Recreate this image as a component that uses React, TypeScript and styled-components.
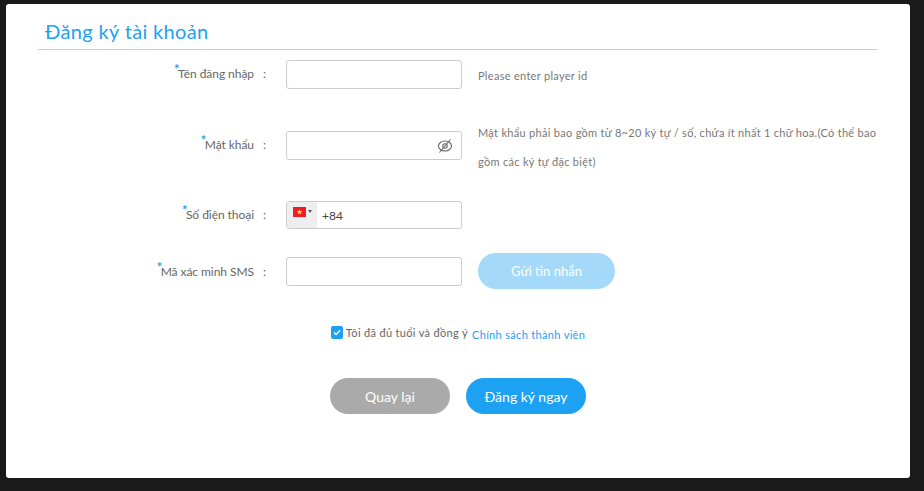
import React from "react";
import styled, { createGlobalStyle } from "styled-components";

const GlobalStyle = createGlobalStyle`
  html, body {
    margin: 0;
    height: 100%;
    background: #1a1a1a;
    font-family: "Lato", "Liberation Sans", sans-serif;
  }
`;

const Screen = styled.div`
  width: 924px;
  height: 491px;
  padding: 4px 14px 13px 6px;
  box-sizing: border-box;
  overflow: hidden;
`;

const Panel = styled.div`
  height: 474px;
  background: #fff;
  border-radius: 3px;
  padding: 0 32px;
  box-sizing: border-box;
`;

const Title = styled.h1`
  margin: 0;
  height: 46px;
  padding: 13px 0 0 7px;
  box-sizing: border-box;
  border-bottom: 1px solid #ccc;
  color: #1da1f2;
  font-size: 20px;
  line-height: 28px;
  font-weight: 400;
  letter-spacing: 0.35px;
`;

const Form = styled.div`
  display: flex;
  flex-direction: column;
  padding-top: 10px;
`;

const Row = styled.div<{ $height: number; $align?: string }>`
  display: grid;
  grid-template-columns: 232px 176px 1fr;
  column-gap: 16px;
  height: ${(p) => p.$height}px;
  align-items: ${(p) => p.$align || "start"};
`;

const Label = styled.label`
  display: flex;
  justify-content: flex-end;
  align-items: center;
  height: 27px;
  color: #666;
  font-size: 12px;
  letter-spacing: -0.05px;
`;

const LabelText = styled.span`
  position: relative;
  margin-right: 9px;
  &::before {
    content: "*";
    position: absolute;
    left: -4px;
    top: -5px;
    color: #1da1f2;
    font-size: 13px;
    font-weight: 700;
  }
`;

const Colon = styled.span`
  width: 7px;
`;

const FieldBox = styled.div<{ $height?: number }>`
  display: flex;
  align-items: center;
  height: ${(p) => p.$height ?? 29}px;
  border: 1px solid #ccc;
  border-radius: 3px;
  box-sizing: border-box;
  background: #fff;
  overflow: hidden;
`;

const EyeSlot = styled.span`
  margin-left: auto;
  margin-right: 8px;
  display: flex;
`;

const FlagSelect = styled.div`
  display: flex;
  align-items: flex-start;
  gap: 2px;
  width: 30px;
  height: 100%;
  padding: 5px 0 0 6px;
  box-sizing: border-box;
  background: #eee;
`;

const Caret = styled.span`
  margin-top: 3px;
  width: 0;
  height: 0;
  border-left: 2.5px solid transparent;
  border-right: 2.5px solid transparent;
  border-top: 3px solid #555;
`;

const PhoneValue = styled.span`
  margin-left: 5px;
  color: #444;
  font-size: 12px;
`;

const Hint = styled.div<{ $shift?: number }>`
  margin-top: ${(p) => p.$shift ?? 1}px;
  color: #777;
  font-size: 11px;
  line-height: 29px;
  letter-spacing: 0.3px;
  white-space: nowrap;
`;

const Pill = styled.button<{ $bg: string; $w: number; $size?: number }>`
  width: ${(p) => p.$w}px;
  height: 36px;
  border: 0;
  border-radius: 18px;
  background: ${(p) => p.$bg};
  color: #fff;
  font-family: inherit;
  font-size: ${(p) => p.$size ?? 14}px;
  padding: 0;
`;

const AgreeRow = styled.div`
  display: flex;
  justify-content: center;
  align-items: center;
  gap: 3px;
  margin-top: 35px;
  height: 16px;
  font-size: 11px;
  letter-spacing: 0.33px;
  color: #666;
`;

const Check = styled.span`
  display: flex;
  align-items: center;
  justify-content: center;
  width: 12px;
  height: 13px;
  border-radius: 2px;
  background: #1da1f2;
`;

const PolicyLink = styled.a`
  color: #1da1f2;
  margin-left: 1px;
  padding-top: 4px;
`;

const Actions = styled.div`
  display: flex;
  justify-content: center;
  gap: 16px;
  margin-top: 38px;
`;

const EyeOff = () => (
  <svg width="16" height="16" viewBox="0 0 16 16" fill="none" stroke="#666" strokeWidth="1.1">
    <ellipse cx="8" cy="8" rx="6.5" ry="5" />
    <circle cx="8" cy="8" r="2.2" />
    <path d="M13.5 1.5 2.5 14.5" />
  </svg>
);

const VnFlag = () => (
  <svg width="13" height="10" viewBox="0 0 13 10">
    <rect width="13" height="10" fill="#ee1c25" />
    <path
      d="M6.5 1.9 7.2 4.1H9.5L7.6 5.4 8.4 7.6 6.5 6.3 4.6 7.6 5.4 5.4 3.5 4.1H5.8Z"
      fill="#ffe83c"
    />
  </svg>
);

const CheckMark = () => (
  <svg width="8" height="7" viewBox="0 0 8 7" fill="none" stroke="#fff" strokeWidth="1.4">
    <path d="M1 3.5 3.1 5.6 7 1.2" />
  </svg>
);

const FieldLabel = ({ text }: { text: string }) => (
  <Label>
    <LabelText>{text}</LabelText>
    <Colon>:</Colon>
  </Label>
);

export default function App() {
  return (
    <>
      <GlobalStyle />
      <Screen>
        <Panel>
          <Title>Đăng ký tài khoản</Title>
          <Form>
            <Row $height={71}>
              <FieldLabel text="Tên đăng nhập" />
              <FieldBox />
              <Hint>Please enter player id</Hint>
            </Row>
            <Row $height={70}>
              <FieldLabel text="Mật khẩu" />
              <FieldBox>
                <EyeSlot>
                  <EyeOff />
                </EyeSlot>
              </FieldBox>
              <Hint $shift={-13}>
                Mật khẩu phải bao gồm từ 8~20 ký tự / số, chứa ít nhất 1 chữ hoa.(Có thể bao
                <br />
                gồm các ký tự đặc biệt)
              </Hint>
            </Row>
            <Row $height={52}>
              <FieldLabel text="Số điện thoại" />
              <FieldBox $height={28}>
                <FlagSelect>
                  <VnFlag />
                  <Caret />
                </FlagSelect>
                <PhoneValue>+84</PhoneValue>
              </FieldBox>
            </Row>
            <Row $height={36} $align="center">
              <FieldLabel text="Mã xác minh SMS" />
              <FieldBox />
              <Pill $bg="#a5d9fa" $w={137} $size={13}>
                Gửi tin nhắn
              </Pill>
            </Row>
            <AgreeRow>
              <Check>
                <CheckMark />
              </Check>
              <span>Tôi đã đủ tuổi và đồng ý</span>
              <PolicyLink>Chính sách thành viên</PolicyLink>
            </AgreeRow>
            <Actions>
              <Pill $bg="#aaaaaa" $w={120}>
                Quay lại
              </Pill>
              <Pill $bg="#1da1f2" $w={120}>
                Đăng ký ngay
              </Pill>
            </Actions>
          </Form>
        </Panel>
      </Screen>
    </>
  );
}
